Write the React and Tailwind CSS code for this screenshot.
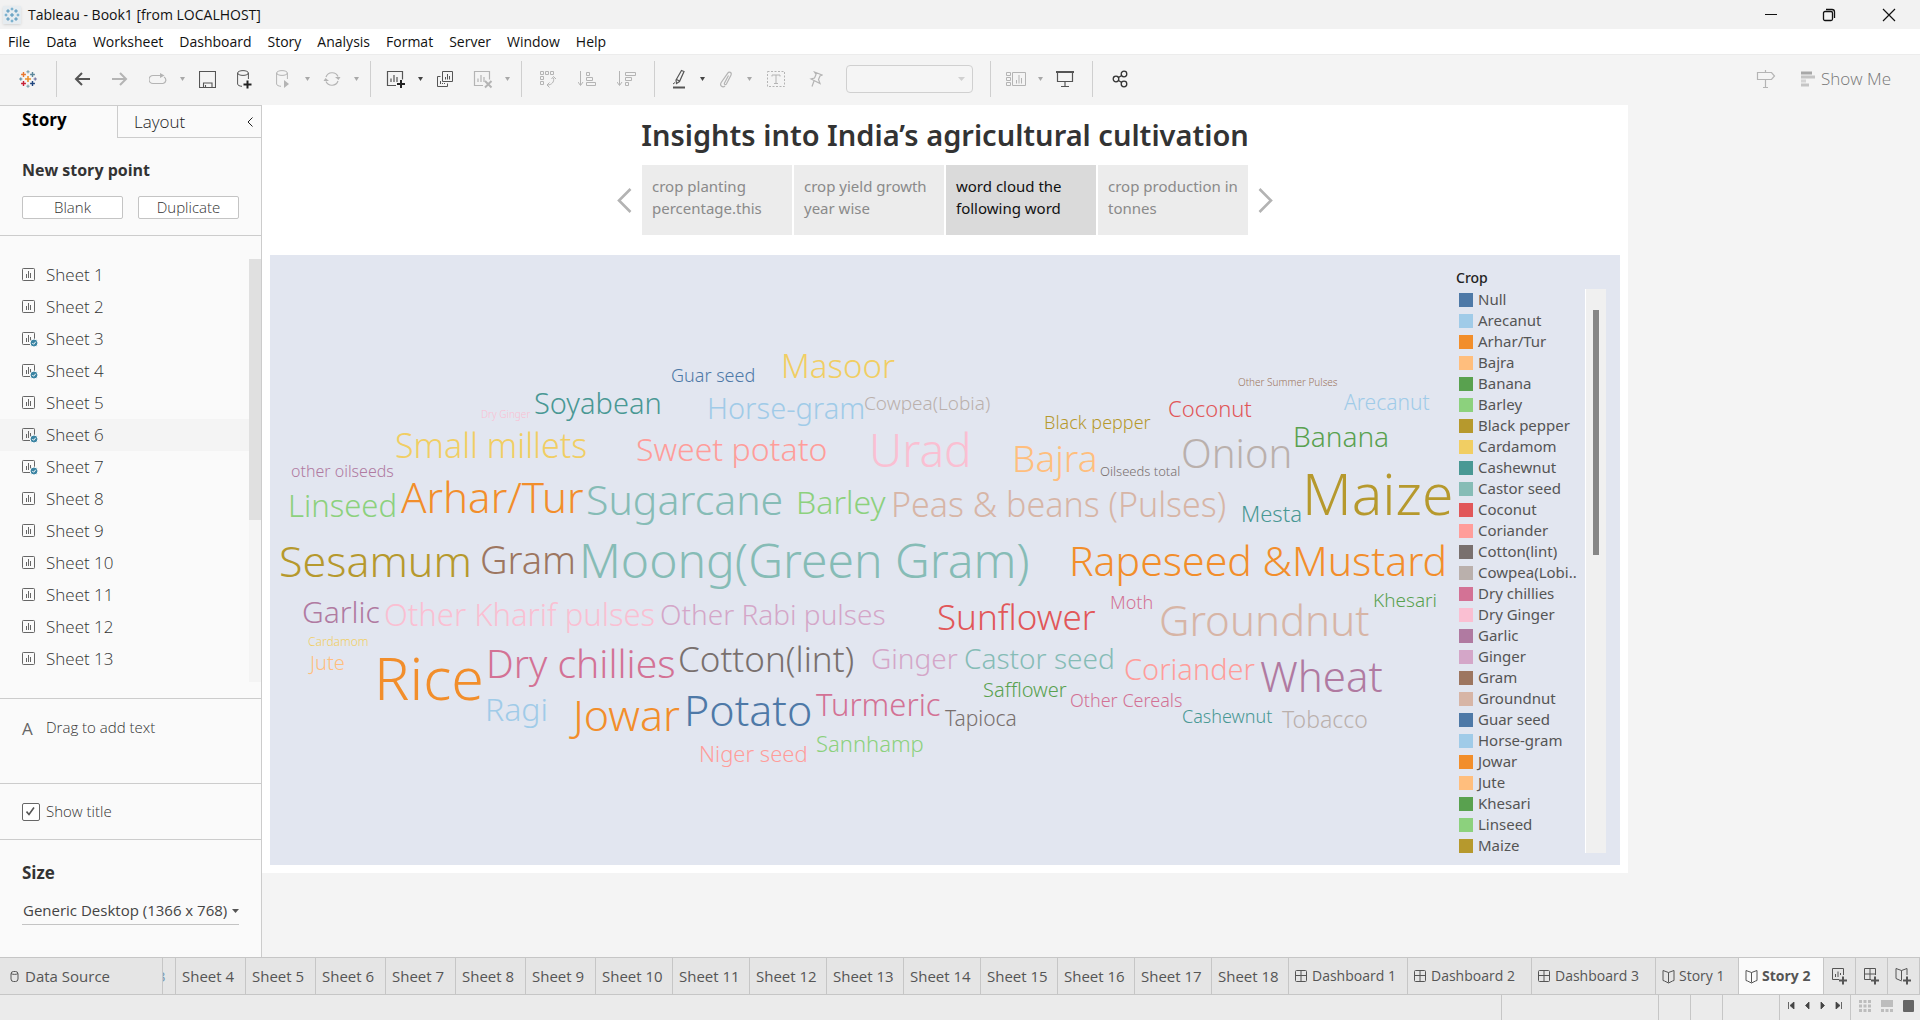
import React from "react";

const tone = {
  blue: "text-[#4e79a7]",
  sky: "text-[#a0cbe8]",
  orange: "text-[#f28e2b]",
  peach: "text-[#ffbe7d]",
  green: "text-[#59a14f]",
  lime: "text-[#8cd17d]",
  olive: "text-[#b6992d]",
  yellow: "text-[#f1ce63]",
  teal: "text-[#499894]",
  aqua: "text-[#86bcb6]",
  red: "text-[#e15759]",
  coral: "text-[#ff9d9a]",
  gray: "text-[#79706e]",
  silver: "text-[#bab0ac]",
  rose: "text-[#d37295]",
  pink: "text-[#fabfd2]",
  purple: "text-[#b07aa1]",
  lilac: "text-[#d4a6c8]",
  brown: "text-[#9d7660]",
  tan: "text-[#d7b5a6]",
};

// word, left, baseline, size, colour: positions on the cloud's own canvas
const words = [
  ["Guar seed", 401, 126, 18, "blue"],
  ["Masoor", 511, 122, 33, "yellow"],
  ["Dry Ginger", 211, 162, 10, "pink"],
  ["Soyabean", 264, 158, 29, "teal"],
  ["Horse-gram", 437, 163, 29, "sky"],
  ["Cowpea(Lobia)", 594, 155, 19, "silver"],
  ["Small millets", 125, 202, 34, "yellow"],
  ["Sweet potato", 366, 205, 32, "coral"],
  ["Urad", 599, 210, 46, "pink"],
  ["Bajra", 742, 215, 37, "peach"],
  ["Black pepper", 774, 173, 18, "olive"],
  ["Coconut", 898, 161, 22, "red"],
  ["Other Summer Pulses", 968, 130, 10, "brown"],
  ["Arecanut", 1074, 155, 21, "sky"],
  ["Banana", 1023, 191, 28, "green"],
  ["Onion", 911, 212, 40, "silver"],
  ["Oilseeds total", 830, 221, 13, "gray"],
  ["other oilseeds", 21, 222, 16, "purple"],
  ["Linseed", 18, 261, 31, "lime"],
  ["Arhar/Tur", 131, 256, 42, "orange"],
  ["Sugarcane", 316, 259, 41, "aqua"],
  ["Barley", 526, 258, 32, "lime"],
  ["Peas & beans (Pulses)", 621, 261, 34, "tan"],
  ["Mesta", 971, 266, 22, "teal"],
  ["Maize", 1032, 258, 57, "olive"],
  ["Sesamum", 9, 320, 43, "olive"],
  ["Gram", 210, 317, 38, "brown"],
  ["Moong(Green Gram)", 309, 322, 48, "aqua"],
  ["Rapeseed &Mustard", 799, 320, 41, "orange"],
  ["Garlic", 32, 367, 30, "purple"],
  ["Other Kharif pulses", 114, 370, 31, "pink"],
  ["Other Rabi pulses", 390, 369, 28, "lilac"],
  ["Sunflower", 667, 374, 35, "red"],
  ["Moth", 840, 353, 18, "rose"],
  ["Groundnut", 889, 379, 42, "tan"],
  ["Khesari", 1103, 352, 19, "green"],
  ["Cardamom", 38, 391, 12, "yellow"],
  ["Jute", 40, 415, 20, "peach"],
  ["Rice", 104, 443, 59, "orange"],
  ["Dry chillies", 216, 421, 39, "rose"],
  ["Cotton(lint)", 408, 416, 35, "gray"],
  ["Ginger", 601, 413, 28, "lilac"],
  ["Castor seed", 694, 413, 28, "aqua"],
  ["Coriander", 854, 424, 29, "coral"],
  ["Wheat", 990, 435, 42, "purple"],
  ["Ragi", 215, 465, 32, "sky"],
  ["Jowar", 303, 474, 43, "orange"],
  ["Potato", 414, 469, 43, "blue"],
  ["Turmeric", 546, 460, 31, "rose"],
  ["Safflower", 713, 442, 20, "green"],
  ["Other Cereals", 800, 451, 18, "rose"],
  ["Tapioca", 675, 471, 21, "gray"],
  ["Cashewnut", 912, 467, 18, "teal"],
  ["Tobacco", 1012, 472, 23, "silver"],
  ["Niger seed", 429, 506, 22, "coral"],
  ["Sannhamp", 546, 496, 22, "lime"],
];

// share of the font size between the top of a line of height 1 and its baseline
const BASELINE = 0.845;

const legend = [
  ["Null", "blue"],
  ["Arecanut", "sky"],
  ["Arhar/Tur", "orange"],
  ["Bajra", "peach"],
  ["Banana", "green"],
  ["Barley", "lime"],
  ["Black pepper", "olive"],
  ["Cardamom", "yellow"],
  ["Cashewnut", "teal"],
  ["Castor seed", "aqua"],
  ["Coconut", "red"],
  ["Coriander", "coral"],
  ["Cotton(lint)", "gray"],
  ["Cowpea(Lobi..", "silver"],
  ["Dry chillies", "rose"],
  ["Dry Ginger", "pink"],
  ["Garlic", "purple"],
  ["Ginger", "lilac"],
  ["Gram", "brown"],
  ["Groundnut", "tan"],
  ["Guar seed", "blue"],
  ["Horse-gram", "sky"],
  ["Jowar", "orange"],
  ["Jute", "peach"],
  ["Khesari", "green"],
  ["Linseed", "lime"],
  ["Maize", "olive"],
];

const menus = ["File", "Data", "Worksheet", "Dashboard", "Story", "Analysis", "Format", "Server", "Window", "Help"];
const used = [3, 4, 6, 7];
const points = ["crop planting percentage.this", "crop yield growth year wise", "word cloud the following word", "crop production in tonnes"];

function Svg({ w, h, className = "", children }) {
  return (
    <svg width={w} height={h} viewBox={`0 0 ${w} ${h}`} fill="none" stroke="currentColor" className={`shrink-0 ${className}`} aria-hidden="true">
      {children}
    </svg>
  );
}

const Bars = ({ x = 0, y = 0 }) => <path d={`M${x + 4.5} ${y + 10}V${y + 6}M${x + 6.5} ${y + 10}V${y + 3}M${x + 8.5} ${y + 10}V${y + 5}`} />;

function Tool({ label, dim, wide = "w-[38px]", children }) {
  return (
    <button type="button" aria-label={label} className={`flex h-9 shrink-0 items-center justify-center ${wide} ${dim ? "text-[#b4b4b4]" : "text-[#555]"}`}>
      {children}
    </button>
  );
}

function Caret({ dim, label }) {
  return (
    <button type="button" aria-label={label} className={`flex h-9 w-[11px] shrink-0 items-center justify-center ${dim ? "text-[#a8a8a8]" : "text-[#444]"}`}>
      <Svg w={5} h={4}><path d="M0 0h5L2.5 4z" fill="currentColor" stroke="none" /></Svg>
    </button>
  );
}

const Divider = ({ className = "ml-2 mr-1.5" }) => <div className={`h-9 w-px shrink-0 bg-[#cfcfcf] ${className}`} />;

function Cross({ x, y, r, c, sw = 1.6 }) {
  return <path d={`M${x - r} ${y}h${r * 2}M${x} ${y - r}v${r * 2}`} stroke={c} strokeWidth={sw} />;
}

function TitleBar() {
  return (
    <header className="flex h-[29px] items-center bg-[#f2f2f2] pl-[3px] text-sm text-[#111]">
      <div className="flex size-[18px] items-center justify-center bg-[#e6ecf0] shadow-sm">
        <Svg w={16} h={16}>
          <Cross x={8} y={8} r={2} c="#4a90b8" sw={1} />
          {[[4, 4], [12, 4], [4, 12], [12, 12]].map(([x, y]) => <Cross key={`${x}-${y}`} x={x} y={y} r={1.8} c="#4a90b8" sw={1} />)}
          {[[8, 2], [8, 14], [2, 8], [14, 8]].map(([x, y]) => <Cross key={`${x}-${y}`} x={x} y={y} r={1.4} c="#5b9fc4" sw={1} />)}
        </Svg>
      </div>
      <h1 className="ml-[7px]">Tableau - Book1 [from LOCALHOST]</h1>
      <div className="ml-auto flex h-full">
        <button type="button" aria-label="Minimize" className="flex w-[58px] items-center justify-center"><Svg w={12} h={12}><path d="M0 5.5h12" /></Svg></button>
        <button type="button" aria-label="Restore" className="flex w-[58px] items-center justify-center">
          <Svg w={14} h={14}><rect x="1.5" y="3.5" width="9" height="9" rx="1.5" strokeWidth="1.3" /><path d="M4 1.5h6a2.5 2.5 0 0 1 2.5 2.5v6" strokeWidth="1.3" /></Svg>
        </button>
        <button type="button" aria-label="Close" className="flex w-[62px] items-center justify-center"><Svg w={14} h={14}><path d="M1 1l12 12M13 1L1 13" strokeWidth="1.2" /></Svg></button>
      </div>
    </header>
  );
}

function MenuBar() {
  return (
    <nav className="flex h-[25px] items-center gap-4 bg-white pl-2 text-sm text-[#111]">
      {menus.map((m) => <button key={m} type="button">{m}</button>)}
    </nav>
  );
}

function Toolbar() {
  return (
    <div className="flex h-[51px] items-center border-t border-[#ececec] bg-[#f4f4f4] pb-0.5">
      <Tool label="Start page" wide="w-14">
        <Svg w={18} h={18}>
          <Cross x={9} y={9} r={3} c="#eb912c" />
          <Cross x={4.5} y={4.5} r={2.4} c="#e8762d" sw={1.4} />
          <Cross x={13.5} y={4.5} r={2.4} c="#5b879b" sw={1.4} />
          <Cross x={4.5} y={13.5} r={2.4} c="#c72035" sw={1.4} />
          <Cross x={13.5} y={13.5} r={2.4} c="#1f457e" sw={1.4} />
          <Cross x={9} y={1.8} r={1.6} c="#7199a6" sw={1} />
          <Cross x={9} y={16.2} r={1.6} c="#7199a6" sw={1} />
          <Cross x={1.8} y={9} r={1.6} c="#59879b" sw={1} />
          <Cross x={16.2} y={9} r={1.6} c="#6b6b9b" sw={1} />
        </Svg>
      </Tool>
      <Divider className="mr-1.5" />
      <Tool label="Undo"><Svg w={16} h={14}><path d="M16 7H2M8 1L2 7l6 6" strokeWidth="2" /></Svg></Tool>
      <Tool label="Redo" dim><Svg w={16} h={14}><path d="M0 7h14M8 1l6 6-6 6" strokeWidth="2" /></Svg></Tool>
      <Tool label="Replay" dim><Svg w={18} h={12}><path d="M9 2.500H4a3.500 3.500 0 0 0 0 8h10a3.500 3.500 0 0 0 1-6.500" strokeWidth="1.200" /><path d="M11 0v5l4.500-2.500z" fill="currentColor" stroke="none" /><path d="M8 2.500h4" /></Svg></Tool>
      <Caret dim label="Replay options" />
      <Tool label="Save"><Svg w={17} h={17}><path d="M.5.5h16v16H.5zM4.500 16.500v-4.500h8.500v4.500M6.500 16v-2" strokeWidth="1.100" /></Svg></Tool>
      <Tool label="New data source">
        <Svg w={16} h={19}><ellipse cx="6" cy="3" rx="5.400" ry="2.400" /><path d="M.6 3v11c0 1.200 2 2.200 4.400 2.300M11.400 3v6" /><path d="M6.500 14.500h8M10.500 10.500v8" strokeWidth="2" stroke="#222" /></Svg>
      </Tool>
      <Tool label="Pause updates" dim>
        <Svg w={14} h={19}><ellipse cx="6" cy="3" rx="5.400" ry="2.400" /><path d="M.6 3v11c0 1.200 2 2.200 4.400 2.300M11.400 3v6" /><path d="M8 10v8l5-4z" fill="currentColor" stroke="none" /></Svg>
      </Tool>
      <Caret dim label="Update options" />
      <Tool label="Refresh" dim>
        <Svg w={18} h={16}><path d="M3 6a6.500 6.500 0 0 1 12-.5M15 10a6.500 6.500 0 0 1-12 .5" strokeWidth="1.200" /><path d="M12 6h5.500l-2 3zM.5 10H6l-3.500-3z" fill="currentColor" stroke="none" /></Svg>
      </Tool>
      <Caret dim label="Refresh options" />
      <Divider />
      <Tool label="New worksheet">
        <Svg w={20} h={20}><path d="M10 16.500H1.500v-14h15v8M5 13V9.500M8 13V6M11 13V8" strokeWidth="1.200" /><path d="M11 15h8M15 11v8" strokeWidth="2" stroke="#222" /></Svg>
      </Tool>
      <Caret label="New worksheet options" />
      <Tool label="Duplicate">
        <Svg w={18} h={18}><path d="M6.500 1.500h10v10h-10zM4.500 6.500h-3v10h10v-3M9.500 9.500V7M11.500 9.500V4M13.500 9.500V6M4.500 14v-3M6.500 14v-1M8.500 14v-1" /></Svg>
      </Tool>
      <Tool label="Clear sheet" dim>
        <Svg w={20} h={20}><path d="M10 16.500H1.500v-14h15v8M5 13V9.500M8 13V6M11 13V8" strokeWidth="1.200" /><path d="M12 12l6.500 6.500M18.500 12L12 18.500" strokeWidth="2" /></Svg>
      </Tool>
      <Caret dim label="Clear options" />
      <Divider />
      <Tool label="Swap rows and columns" dim wide="w-[39px]">
        <Svg w={18} h={18}><path d="M1.500 1.500h3v3h-3zM6.500 1.500h3v3h-3zM11.500 1.500h3v3h-3zM1.500 6.500h3v3h-3zM1.500 11.500h3v3h-3z" /><path d="M14.500 8c1 4-2 7-6 7M12.500 9l2-2.500 2.500 2.500M10.500 12.500L8 15l2.500 2.500" /></Svg>
      </Tool>
      <Tool label="Sort ascending" dim wide="w-10">
        <Svg w={19} h={16}><path d="M2.500 0v14M0 11l2.500 3.500L5 11M8.500 1.500h3v3h-3zM8.500 6.500h6v3h-6zM8.500 11.500h9v3h-9z" /></Svg>
      </Tool>
      <Tool label="Sort descending" dim wide="w-[39px]">
        <Svg w={19} h={16}><path d="M2.500 0v14M0 11l2.500 3.500L5 11M8.500 1.500h10v3h-10zM8.500 6.500h6v3h-6zM8.500 11.500h3v3h-3z" /></Svg>
      </Tool>
      <Divider />
      <Tool label="Highlight" wide="w-9">
        <Svg w={14} h={20}><path d="M9.500 1.500l2.500 1-4.500 10-3 2-.5-3.500zM4.500 10.500l3 1.500" strokeWidth="1.200" /><path d="M1 15l2-1.500" /><path d="M1 18.500h12" strokeWidth="2" /></Svg>
      </Tool>
      <Caret label="Highlight options" />
      <Tool label="Group members" dim wide="w-9">
        <Svg w={14} h={17}><path d="M9.500 4.500l-4 7.500c-.6 1.400 1 2.300 1.900 1l4.300-8.300C13.500 1.200 10 .2 8.600 2.300L2.200 11.500c-1.900 3.300 1.600 5.500 3.800 3.500" strokeWidth="1.200" /></Svg>
      </Tool>
      <Caret dim label="Group options" />
      <Tool label="Show mark labels" dim wide="w-[42px]">
        <Svg w={18} h={17}><path d="M.5.5h17v15H.5z" strokeDasharray="2 1.500" /><path d="M5 5.500V4h8v1.500M9 4v9M7 12.500h4" /></Svg>
      </Tool>
      <Tool label="Fix axes" dim wide="w-[38px]">
        <Svg w={14} h={17}><path d="M5.500 1l7.500 3-2 1-1.500 3.500 1.500 4-9-4.500 3.500-1L7 3.500zM5 10L3 15.500" strokeWidth="1.200" /></Svg>
      </Tool>
      <div className="relative ml-[11px] shrink-0">
        <select aria-label="Fit" disabled className="block h-7 w-[127px] appearance-none rounded-sm border border-[#d0d0d0] bg-[#f5f5f5]" />
        <Svg w={7} h={4} className="absolute right-2 top-3 text-[#d0d0d0]"><path d="M0 0h7L3.500 4z" fill="currentColor" stroke="none" /></Svg>
      </div>
      <Divider className="ml-[17px] mr-1.5" />
      <Tool label="Show cards" dim>
        <Svg w={20} h={16}><path d="M.5 1.500h4v3h-4zM.5 6.500h4v3h-4zM.5 11.500h4v3h-4zM6.500 1.500h13v13h-13zM10.500 12.500V9M13 12.500V4M15.500 12.500V7" /></Svg>
      </Tool>
      <Caret dim label="Card options" />
      <Tool label="Presentation mode">
        <Svg w={18} h={18}><path d="M0 2h18" strokeWidth="2" /><path d="M1.500 3v8.500h15V3M9 12v4.500M5 16.500h8" strokeWidth="1.200" /></Svg>
      </Tool>
      <Divider className="mx-2" />
      <Tool label="Share">
        <Svg w={16} h={18} className="text-[#333]"><circle cx="4" cy="9" r="2.800" strokeWidth="1.300" /><circle cx="12" cy="4" r="2.800" strokeWidth="1.300" /><circle cx="12" cy="14" r="2.800" strokeWidth="1.300" /><path d="M6.500 7.500L9.700 5.500M6.500 10.500l3.200 2" strokeWidth="1.300" /></Svg>
      </Tool>
      <div className="ml-auto flex items-center pr-[29px]">
        <Tool label="Guide" dim><Svg w={20} h={20}><path d="M1.500 3.500h14l3 3.500-3 3.500h-14zM9.500 1v2M9.500 11v7.500M7 18.500h5" strokeWidth="1.200" /></Svg></Tool>
        <button type="button" className="ml-4 flex items-center gap-1.5 text-[17px] font-[350] text-[#777]">
          <Svg w={14} h={16}><path d="M0 2h11" stroke="#a8a8a8" strokeWidth="3" /><path d="M0 6h14" stroke="#c4c4c4" strokeWidth="3" /><path d="M0 10h5" stroke="#d4d4d4" strokeWidth="3" /><path d="M0 14h8" stroke="#c4c4c4" strokeWidth="3" /></Svg>
          Show Me
        </button>
      </div>
    </div>
  );
}

function SheetIcon({ checked }) {
  return (
    <Svg w={16} h={16} className="text-[#666]">
      <rect x=".5" y="1.500" width="12" height="12" rx=".8" />
      <Bars y={1} />
      {checked && (
        <>
          <circle cx="12" cy="12" r="4" fill="#3b84a3" stroke="#fafafa" strokeWidth="1" />
          <path d="M10.300 12l1.300 1.300 2.200-2.600" stroke="#fff" />
        </>
      )}
    </Svg>
  );
}

function Sidebar() {
  return (
    <aside className="flex w-[262px] shrink-0 flex-col border-r border-t border-[#cccccc] bg-[#fafafa] font-[350] text-[#333]">
      <div className="flex h-8">
        <button type="button" className="w-[117px] pb-1 pl-[22px] text-left text-[17px] font-bold text-black">Story</button>
        <button type="button" className="flex flex-1 items-center border-b border-l border-[#cccccc] pl-4 text-[17px] text-[#222]">
          Layout
          <Svg w={6} h={10} className="ml-auto mr-2"><path d="M5.500.5L1 5l4.500 4.500" /></Svg>
        </button>
      </div>
      <section className="border-b border-[#cccccc] px-[22px] pb-4 pt-5">
        <h2 className="text-base font-bold">New story point</h2>
        <div className="mt-3.5 flex gap-[15px]">
          {["Blank", "Duplicate"].map((b) => (
            <button key={b} type="button" className="flex h-[23px] flex-1 items-center justify-center rounded-xs border border-[#c4c4c4] bg-white text-[15px]">{b}</button>
          ))}
        </div>
      </section>
      <section className="flex h-[463px] border-b border-[#cccccc] pb-4 pt-[23px]">
        <ul className="flex-1 overflow-hidden">
          {Array.from({ length: 13 }, (_, i) => i + 1).map((n) => (
            <li key={n} className={`flex h-8 items-center gap-2 pl-[22px] text-[17px] ${n === 6 ? "bg-[#f4f4f4]" : ""}`}>
              <SheetIcon checked={used.includes(n)} />
              Sheet {n}
            </li>
          ))}
        </ul>
        <div className="w-3 bg-[#f4f4f4]"><div className="h-[261px] bg-[#e0e0e0]" /></div>
      </section>
      <section className="flex h-[85px] border-b border-[#cccccc] pl-[22px] pt-[17px] text-[15px]">
        <span className="w-6 text-[17px] font-normal text-[#666]">A</span>
        <span>Drag to add text</span>
      </section>
      <section className="flex h-14 items-center border-b border-[#cccccc] pl-[22px] text-[15px]">
        <label className="flex items-center gap-1.5">
          <span className="relative flex">
            <input type="checkbox" defaultChecked className="size-[18px] appearance-none rounded-xs border border-[#666] bg-white" />
            <Svg w={9} h={9} className="pointer-events-none absolute left-1 top-1 text-[#555]"><path d="M.5 4.500l2.500 3L8 .5" strokeWidth="1.600" /></Svg>
          </span>
          Show title
        </label>
      </section>
      <section className="px-[22px] pt-[21px]">
        <h2 className="text-[17px] leading-6 font-bold">Size</h2>
        <div className="relative mt-3 border-b border-[#c4c4c4]">
          <select aria-label="Story size" className="block h-[27px] w-full appearance-none bg-transparent pl-px text-[15px] font-normal text-[#444] outline-none">
            <option>Generic Desktop (1366 x 768)</option>
          </select>
          <Svg w={7} h={4} className="pointer-events-none absolute right-0 top-3 text-[#555]"><path d="M0 0h7L3.500 4z" fill="currentColor" stroke="none" /></Svg>
        </div>
      </section>
    </aside>
  );
}

function Navigator() {
  return (
    <div className="mt-2.5 flex items-center justify-center gap-2.5">
      <button type="button" aria-label="Previous point" className="text-[#b3b3b3]"><Svg w={15} h={25}><path d="M13.500 1L2 12.500 13.500 24" strokeWidth="2.600" /></Svg></button>
      <ol className="flex gap-0.5">
        {points.map((p, i) => (
          <li key={p}>
            <button type="button" className={`block h-[70px] w-[150px] px-2.5 pb-1.5 text-left text-[15px] leading-[22px] ${i === 2 ? "bg-[#dadada] text-[#111]" : "bg-[#ececec] text-[#8a8a8a]"}`}>{p}</button>
          </li>
        ))}
      </ol>
      <button type="button" aria-label="Next point" className="text-[#b3b3b3]"><Svg w={15} h={25}><path d="M1.500 1L13 12.500 1.500 24" strokeWidth="2.600" /></Svg></button>
    </div>
  );
}

function Story() {
  return (
    <article className="flex h-[768px] w-[1366px] flex-col bg-white px-2 pb-2 pt-2.5 font-['Noto_Sans','Open_Sans',sans-serif]">
      <h2 className="text-center text-[29px] font-semibold leading-10 text-[#333]">Insights into India’s agricultural cultivation</h2>
      <Navigator />
      <div className="mt-5 flex min-h-0 flex-1 bg-[#e2e6f0] pr-3.5">
        <div className="relative flex-1 font-light">
          {words.map(([w, x, y, s, c]) => (
            <span key={w} className={`absolute whitespace-nowrap leading-none ${tone[c]}`} style={{ left: x, top: Math.round(y - s * BASELINE), fontSize: s }}>{w}</span>
          ))}
        </div>
        <div className="flex w-[150px] flex-col pb-[9px] pt-3">
          <h3 className="h-[22px] text-sm font-medium leading-[22px] text-[#222]">Crop</h3>
          <div className="flex min-h-0 flex-1">
            <ul className="min-h-0 flex-1 pl-[3px]">
              {legend.map(([name, c]) => (
                <li key={name} className="flex h-[21px] items-center gap-[5px] whitespace-nowrap text-[15px] text-[#555]">
                  <span className={`size-3.5 shrink-0 bg-current ${tone[c]}`} />
                  {name}
                </li>
              ))}
            </ul>
            <div className="mb-[3px] w-[21px] border-l border-white bg-[#f0f0f0] pl-[7px] pt-[21px]"><div className="h-[245px] w-1.5 bg-[#868686]" /></div>
          </div>
        </div>
      </div>
    </article>
  );
}

const GridIcon = () => <Svg w={13} h={14}><rect x=".5" y="1.500" width="11" height="11" rx="1" /><path d="M6 1.500v11M.5 6.500h11" /></Svg>;
const BookIcon = () => <Svg w={13} h={15}><path d="M6.500 3.500v10M6.500 3.500L1 1.500v10l1.500.5M6.500 3.500L12 1.500v10l-1.500.5M2.500 12l4 2 4-2" /></Svg>;
const Plus = () => <path d="M8 13.500h8M12 9.500v8" strokeWidth="2" />;

function Tab({ wide, children, icon, size = "text-sm", active }) {
  return (
    <button type="button" className={`flex h-full shrink-0 items-center gap-1 whitespace-nowrap border-r border-[#c6c6c6] pl-1.5 ${size} ${wide} ${active ? "bg-[#fafafa] font-bold" : ""}`}>
      {icon}
      {children}
    </button>
  );
}

function BottomBar() {
  return (
    <footer className="text-[#555]">
      <div className="flex h-[38px] overflow-hidden border-y border-[#c6c6c6] bg-[#e5e5e5]">
        <button type="button" className="flex w-[163px] shrink-0 items-center gap-1.5 border-r border-[#c6c6c6] pl-2.5 text-[15px]">
          <Svg w={9} h={13}><rect x="1" y="1.500" width="7" height="10" rx="2.500" /><path d="M1 3.500c1 1.200 6 1.200 7 0" /></Svg>
          Data Source
        </button>
        <button type="button" aria-label="Sheet 3" className="flex w-[13px] shrink-0 items-center overflow-hidden border-r border-[#c6c6c6] text-[15px] text-[#7a9cb5]"><span className="-ml-[6px]">3</span></button>
        {[4, 5, 6, 7, 8, 9].map((n) => <Tab key={n} wide="w-[70px]" size="text-[15px]">Sheet {n}</Tab>)}
        {[10, 11, 12, 13, 14, 15, 16, 17, 18].map((n) => <Tab key={n} wide="w-[77px]" size="text-[15px]">Sheet {n}</Tab>)}
        <Tab wide="w-[119px]" icon={<GridIcon />}>Dashboard 1</Tab>
        <Tab wide="w-[124px]" icon={<GridIcon />}>Dashboard 2</Tab>
        <Tab wide="w-[124px]" icon={<GridIcon />}>Dashboard 3</Tab>
        <Tab wide="w-[83px]" icon={<BookIcon />}>Story 1</Tab>
        <Tab wide="w-[85px]" icon={<BookIcon />} active>Story 2</Tab>
        <button type="button" aria-label="New worksheet" className="flex w-8 items-center justify-center border-r border-[#c6c6c6]"><Svg w={17} h={18}><path d="M8 12.500H1.500v-11h11V8M4.500 10V7M7 10V4.500M9.500 8V6" /><Plus /></Svg></button>
        <button type="button" aria-label="New dashboard" className="flex w-8 items-center justify-center border-r border-[#c6c6c6]"><Svg w={17} h={18}><path d="M8 12.500H1.500v-11h11V8M7 1.500v11M1.500 7h11" /><Plus /></Svg></button>
        <button type="button" aria-label="New story" className="flex w-8 items-center justify-center border-r border-[#c6c6c6]"><Svg w={17} h={18}><path d="M6.500 3.500v10M6.500 3.500L1 1.500v10l5.500 2.500M6.500 3.500L12 1.500V8" /><Plus /></Svg></button>
      </div>
      <div className="flex h-[25px] justify-end bg-[#ebebeb]">
        <div className="w-[157px] border-l border-[#c6c6c6]" />
        <div className="w-8 border-l border-[#c6c6c6]" />
        <div className="w-8 border-l border-[#c6c6c6]" />
        <div className="w-[57px] border-l border-[#c6c6c6]" />
        <div className="flex w-[71px] items-center justify-around border-l border-[#c6c6c6] px-1 pb-1 text-[#444]">
          {[["First sheet", "M.5 0v7M6 0v7L2 3.500z"], ["Previous sheet", "M5 0v7L1.500 3.500z"], ["Next sheet", "M2 0v7l3.500-3.500z"], ["Last sheet", "M1 0v7l4-3.500zM6.500 0v7"]].map(([l, d]) => (
            <button key={l} type="button" aria-label={l}><Svg w={7} h={7}><path d={d} fill="currentColor" strokeWidth=".8" /></Svg></button>
          ))}
        </div>
        <div className="flex w-[70px] items-center justify-between border-l border-[#c6c6c6] pb-1 pl-2 pr-1.5 text-[#bdbdbd]">
          <button type="button" aria-label="Sheet sorter"><Svg w={12} h={12}><path d="M0 1.500h12M0 6h12M0 10.500h12" strokeWidth="3" strokeDasharray="3 1.500" /></Svg></button>
          <button type="button" aria-label="Filmstrip"><Svg w={12} h={12}><path d="M0 3.500h12" strokeWidth="7" /><path d="M0 10.500h12" strokeWidth="3" strokeDasharray="3 1.500" /></Svg></button>
          <button type="button" aria-label="Tabs" className="text-[#666]"><Svg w={11} h={12}><rect width="11" height="12" rx="1" fill="currentColor" stroke="none" /></Svg></button>
        </div>
      </div>
    </footer>
  );
}

export default function App() {
  return (
    <div className="flex min-h-screen flex-col overflow-hidden bg-[#f4f4f4] font-['Open_Sans','Noto_Sans',sans-serif]">
      <TitleBar />
      <MenuBar />
      <Toolbar />
      <main className="flex flex-1">
        <Sidebar />
        <Story />
      </main>
      <BottomBar />
    </div>
  );
}
